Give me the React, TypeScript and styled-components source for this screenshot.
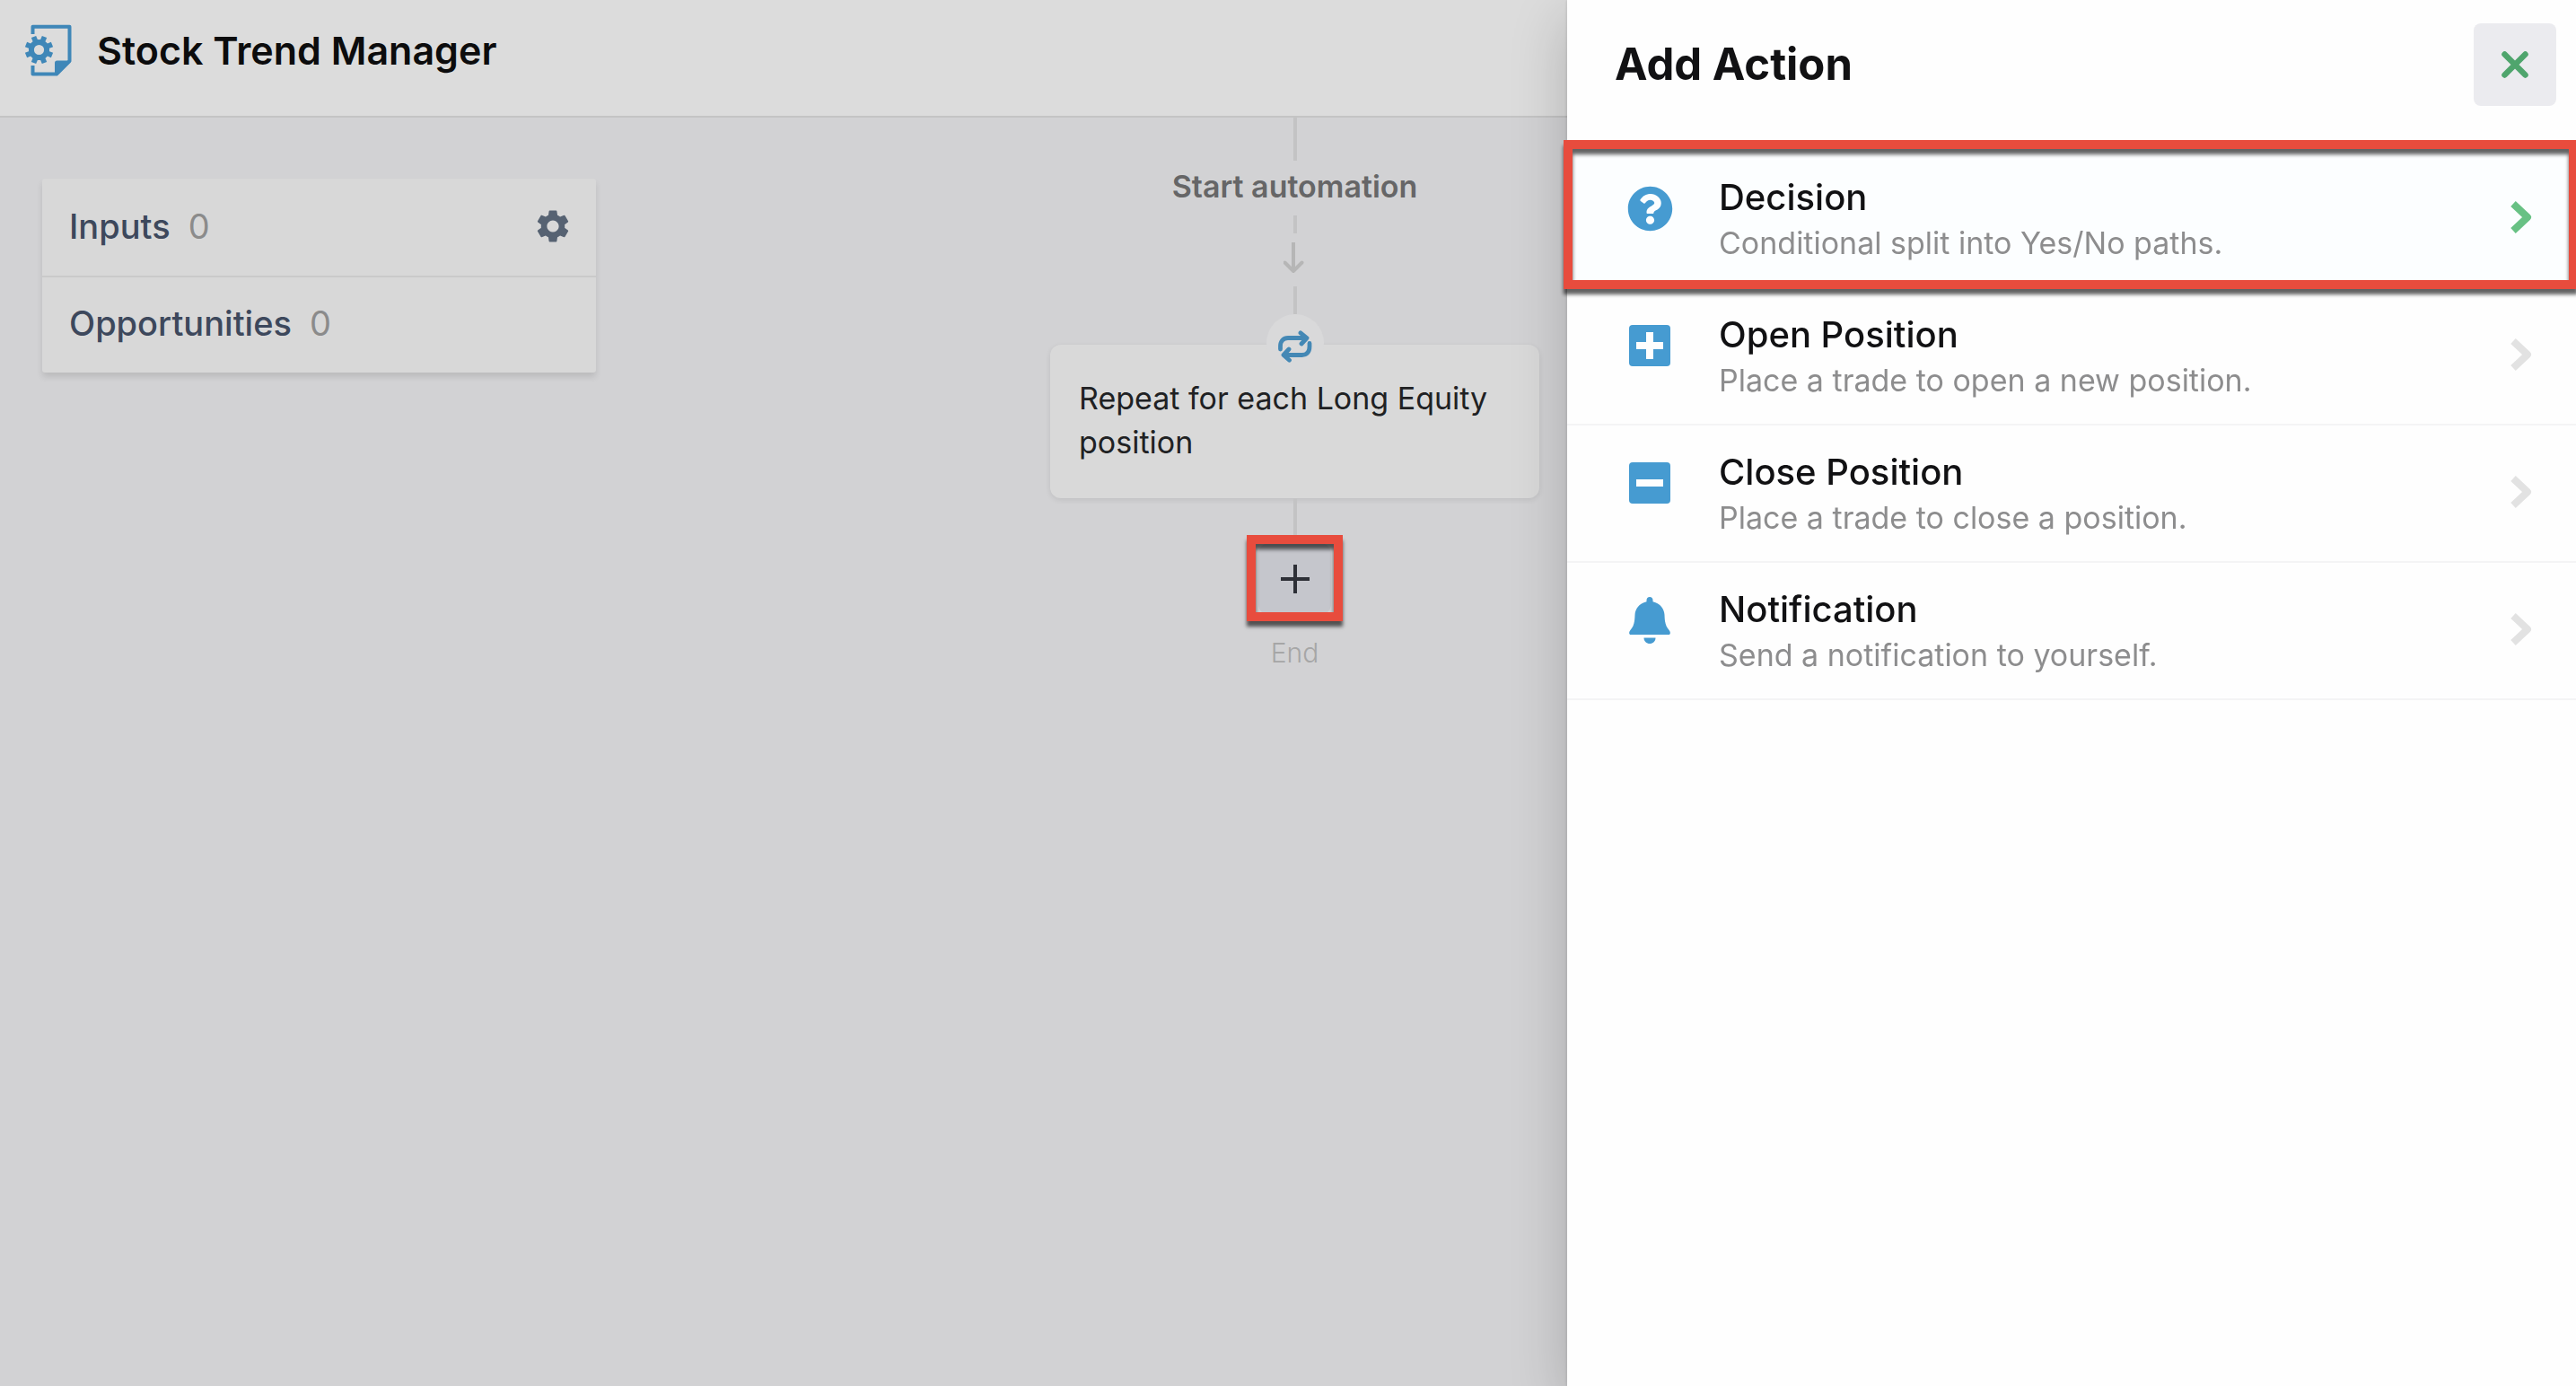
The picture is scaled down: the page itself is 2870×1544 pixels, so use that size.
import React from "react";
import styled, { createGlobalStyle, css } from "styled-components";
import { FaQuestionCircle } from "react-icons/fa";
import { MdSettings } from "react-icons/md";

const GlobalStyle = createGlobalStyle`
  *, *::before, *::after { box-sizing: border-box; }
  body {
    margin: 0;
    background: #d2d2d4;
    font-family: Inter, "Liberation Sans", sans-serif;
    color: #111113;
  }
  button { font: inherit; color: inherit; border: 0; background: none; padding: 0; cursor: pointer; }
  h1, h2, p, ul { margin: 0; padding: 0; }
  svg { display: block; flex: none; }
`;

const callout = css`
  position: relative;
  &::after {
    content: "";
    position: absolute;
    border: 10px solid #e84c3d;
    box-shadow: 0 6px 4px rgba(0, 0, 0, 0.62), inset 0 6px 4px rgba(0, 0, 0, 0.62);
    pointer-events: none;
  }
`;

const Page = styled.div`
  min-height: 100vh;
  display: flex;
  flex-direction: column;
`;

const TopBar = styled.header`
  display: flex;
  align-items: center;
  gap: 27px;
  padding: 24px 27px 41px;
  background: #dcdcdc;
  border-bottom: 2px solid #c4c4c4;
`;

const PageTitle = styled.h1`
  font-size: 43px;
  line-height: 64px;
  font-weight: 600;
  color: #0c0c0d;
`;

const Canvas = styled.main`
  flex: 1;
  display: grid;
  grid-template-columns: 1fr 545px 1fr;
  padding: 0 32px 0 47px;
`;

const Summary = styled.section`
  justify-self: start;
  align-self: start;
  width: 617px;
  margin-top: 68px;
  background: #d8d8d8;
  border-radius: 3px;
  box-shadow: 0 5px 7px rgba(0, 0, 0, 0.11);
`;

const SummaryRow = styled.div`
  display: flex;
  align-items: center;
  gap: 20px;
  height: 108px;
  padding: 0 26px 2px 30px;
  font-size: 38px;
  line-height: 48px;
  & + & {
    border-top: 2px solid #cacaca;
    padding-bottom: 4px;
  }
`;

const SummaryLabel = styled.span`
  font-weight: 500;
  color: #3d485c;
`;

const SummaryCount = styled.span`
  flex: 1;
  color: #8b8b8b;
`;

const IconButton = styled.button`
  color: #566272;
`;

const Flow = styled.section`
  display: flex;
  flex-direction: column;
  align-items: center;
`;

const Connector = styled.div<{ $length: number }>`
  width: 4px;
  height: ${(p) => p.$length}px;
  background: #c3c3c4;
`;

const StartLabel = styled.p`
  padding-bottom: 3px;
  font-size: 34px;
  line-height: 58px;
  font-weight: 600;
  color: #666667;
`;

const ArrowSlot = styled.div`
  padding: 10px 0 14px;
`;

const LoopBadge = styled.div`
  z-index: 1;
  display: grid;
  place-items: center;
  width: 64px;
  height: 64px;
  margin-bottom: -30px;
  padding-top: 8px;
  border-radius: 50%;
  background: #d9d9da;
`;

const LoopCard = styled.div`
  align-self: stretch;
  padding: 35px 32px 38px;
  border-radius: 12px;
  background: #d9d9d9;
  box-shadow: 0 2px 6px rgba(0, 0, 0, 0.09);
  font-size: 34px;
  line-height: 49px;
  color: #202123;
`;

const AddSlot = styled.div`
  ${callout}
  width: 107px;
  height: 96px;
  padding: 9px 13px 7px;
  &::after { inset: 0; }
`;

const AddButton = styled.button`
  display: grid;
  place-items: center;
  width: 100%;
  height: 80px;
  border-radius: 12px;
  background: #c5c6cc;
`;

const EndLabel = styled.p`
  margin-top: 15px;
  font-size: 30px;
  line-height: 40px;
  font-weight: 300;
  color: #a6a6a6;
`;

const Drawer = styled.aside`
  position: fixed;
  top: 0;
  right: 0;
  bottom: 0;
  width: 1124px;
  max-width: 100%;
  background: #fefefe;
  box-shadow: 0 20px 60px rgba(0, 0, 0, 0.2), 0 0 4px rgba(0, 0, 0, 0.15);
`;

const DrawerHeader = styled.div`
  display: flex;
  align-items: center;
  justify-content: space-between;
  padding: 26px 22px 50px 53px;
`;

const DrawerTitle = styled.h2`
  font-size: 49px;
  line-height: 64px;
  font-weight: 700;
`;

const CloseButton = styled.button`
  display: grid;
  place-items: center;
  width: 92px;
  height: 92px;
  border-radius: 8px;
  background: #ebebef;
`;

const ActionList = styled.ul`
  list-style: none;
`;

const ActionItem = styled.li<{ $active?: boolean }>`
  border-bottom: 2px solid #f4f4f5;
  ${(p) =>
    p.$active &&
    css`
      ${callout}
      background: #fcfeff;
      &::after { inset: -12px -2px -3px -4px; }
    `}
`;

const ActionButton = styled.button`
  display: flex;
  align-items: flex-start;
  width: 100%;
  padding: 26px 47px 23px 66px;
  text-align: left;
`;

const ActionIcon = styled.span`
  display: grid;
  place-items: center;
  width: 52px;
  height: 52px;
  margin: 12px 51px 0 0;
  color: #469bd1;
`;

const ActionText = styled.span`
  flex: 1;
  display: flex;
  flex-direction: column;
  line-height: 51px;
`;

const ActionName = styled.span`
  font-size: 40px;
  font-weight: 500;
`;

const ActionNote = styled.span`
  font-size: 34px;
  color: #8d8d8e;
`;

const Chevron = styled.svg<{ $active?: boolean }>`
  margin-top: 29px;
  color: ${(p) => (p.$active ? "#68c184" : "#e2e2e2")};
`;

const LogoIcon = () => (
  <svg width="54" height="60" viewBox="17 16 54 60" fill="none" stroke="#3f87b8" aria-hidden="true">
    <path d="M26.5 28V19.7H67.5V58L53 72.5H26.5V63" strokeWidth="4" strokeLinejoin="round" />
    <path d="M51 73V60a2.500 2.500 0 0 1 2.500-2.500H69z" fill="#3f87b8" stroke="none" />
    <circle cx="33.500" cy="45.500" r="8.600" strokeWidth="6" />
    {[22.5, 67.5, 112.5, 157.5, 202.5, 247.5, 292.5, 337.5].map((angle) => (
      <path
        key={angle}
        d="M33.500 35.500V29.800"
        strokeWidth="5.800"
        transform={`rotate(${angle} 33.500 45.500)`}
      />
    ))}
  </svg>
);

const ArrowDown = () => (
  <svg width="26" height="35" viewBox="0 0 26 35" fill="none" stroke="#b6b6b6" strokeWidth="4" aria-hidden="true">
    <path d="M11 0V32M1.500 22.500L11 32L20.500 22.500" strokeLinejoin="round" strokeLinecap="round" />
  </svg>
);

const LoopIcon = () => (
  <svg width="40" height="36" viewBox="0 0 40 36" fill="none" stroke="#4488b5" strokeWidth="4.800" strokeLinecap="round" strokeLinejoin="round" aria-hidden="true">
    <path d="M3.500 21V17.500C3.500 12 7 8.500 12 8.500H31" />
    <path d="M36 14.500V18C36 24 33 27.500 27.500 27.500H8" />
    <path d="M26 2.800L33 8.500L27 15M13 21L7 27.500L13.500 33.200" />
  </svg>
);

const PlusIcon = () => (
  <svg width="34" height="34" viewBox="0 0 34 34" stroke="#2d2f36" strokeWidth="4" aria-hidden="true">
    <path d="M17 1V33M1 17H33" />
  </svg>
);

const CloseIcon = () => (
  <svg width="34" height="34" viewBox="0 0 34 34" stroke="#4fa56d" strokeWidth="6.500" strokeLinecap="round" aria-hidden="true">
    <path d="M5.500 5.500L28.500 28.500M28.500 5.500L5.500 28.500" />
  </svg>
);

const SquareIcon = ({ plus }: { plus?: boolean }) => (
  <svg width="46" height="46" viewBox="0 0 46 46" aria-hidden="true">
    <rect width="46" height="46" rx="4" fill="#469bd1" />
    <path d={plus ? "M8 23H38M23 8V38" : "M8 23H38"} stroke="#fefefe" strokeWidth="8" />
  </svg>
);

const BellIcon = () => (
  <svg width="46" height="52" viewBox="0 0 46 52" fill="#469bd1" aria-hidden="true">
    <path d="M23 0C20.800 0 19.500 1.600 19.500 3.600V5.200C11 7 6.800 13.500 6.500 20C6.200 28 5.500 32.500 1.200 37.200C-.6 39.500 0 42 2 42H44C46 42 46.600 39.500 44.800 37.200C40.500 32.500 39.800 28 39.500 20C39.200 13.500 35 7 26.500 5.200V3.600C26.500 1.600 25.200 0 23 0Z" />
    <path d="M16.500 45.500H29.500C29.500 49.500 26.500 52 23 52S16.500 49.500 16.500 45.500Z" />
  </svg>
);

const actions = [
  { name: "Decision", note: "Conditional split into Yes/No paths.", icon: <FaQuestionCircle size={51} />, active: true },
  { name: "Open Position", note: "Place a trade to open a new position.", icon: <SquareIcon plus /> },
  { name: "Close Position", note: "Place a trade to close a position.", icon: <SquareIcon /> },
  { name: "Notification", note: "Send a notification to yourself.", icon: <BellIcon /> },
];

export default function App() {
  return (
    <Page>
      <GlobalStyle />
      <TopBar>
        <LogoIcon />
        <PageTitle>Stock Trend Manager</PageTitle>
      </TopBar>
      <Canvas>
        <Summary>
          <SummaryRow>
            <SummaryLabel>Inputs</SummaryLabel>
            <SummaryCount>0</SummaryCount>
            <IconButton aria-label="Input settings">
              <MdSettings size={44} />
            </IconButton>
          </SummaryRow>
          <SummaryRow>
            <SummaryLabel>Opportunities</SummaryLabel>
            <SummaryCount>0</SummaryCount>
          </SummaryRow>
        </Summary>
        <Flow>
          <Connector $length={48} />
          <StartLabel>Start automation</StartLabel>
          <Connector $length={20} />
          <ArrowSlot>
            <ArrowDown />
          </ArrowSlot>
          <Connector $length={31} />
          <LoopBadge>
            <LoopIcon />
          </LoopBadge>
          <LoopCard>Repeat for each Long Equity position</LoopCard>
          <Connector $length={41} />
          <AddSlot>
            <AddButton aria-label="Add action">
              <PlusIcon />
            </AddButton>
          </AddSlot>
          <EndLabel>End</EndLabel>
        </Flow>
      </Canvas>
      <Drawer aria-label="Add Action">
        <DrawerHeader>
          <DrawerTitle>Add Action</DrawerTitle>
          <CloseButton aria-label="Close">
            <CloseIcon />
          </CloseButton>
        </DrawerHeader>
        <ActionList>
          {actions.map((action) => (
            <ActionItem key={action.name} $active={action.active}>
              <ActionButton>
                <ActionIcon>{action.icon}</ActionIcon>
                <ActionText>
                  <ActionName>{action.name}</ActionName>
                  <ActionNote>{action.note}</ActionNote>
                </ActionText>
                <Chevron
                  $active={action.active}
                  width="26"
                  height="38"
                  viewBox="0 0 26 38"
                  fill="none"
                  stroke="currentColor"
                  strokeWidth="8"
                  strokeLinejoin="round"
                  aria-hidden="true"
                >
                  <path d="M3 4L19 19L3 34" />
                </Chevron>
              </ActionButton>
            </ActionItem>
          ))}
        </ActionList>
      </Drawer>
    </Page>
  );
}
